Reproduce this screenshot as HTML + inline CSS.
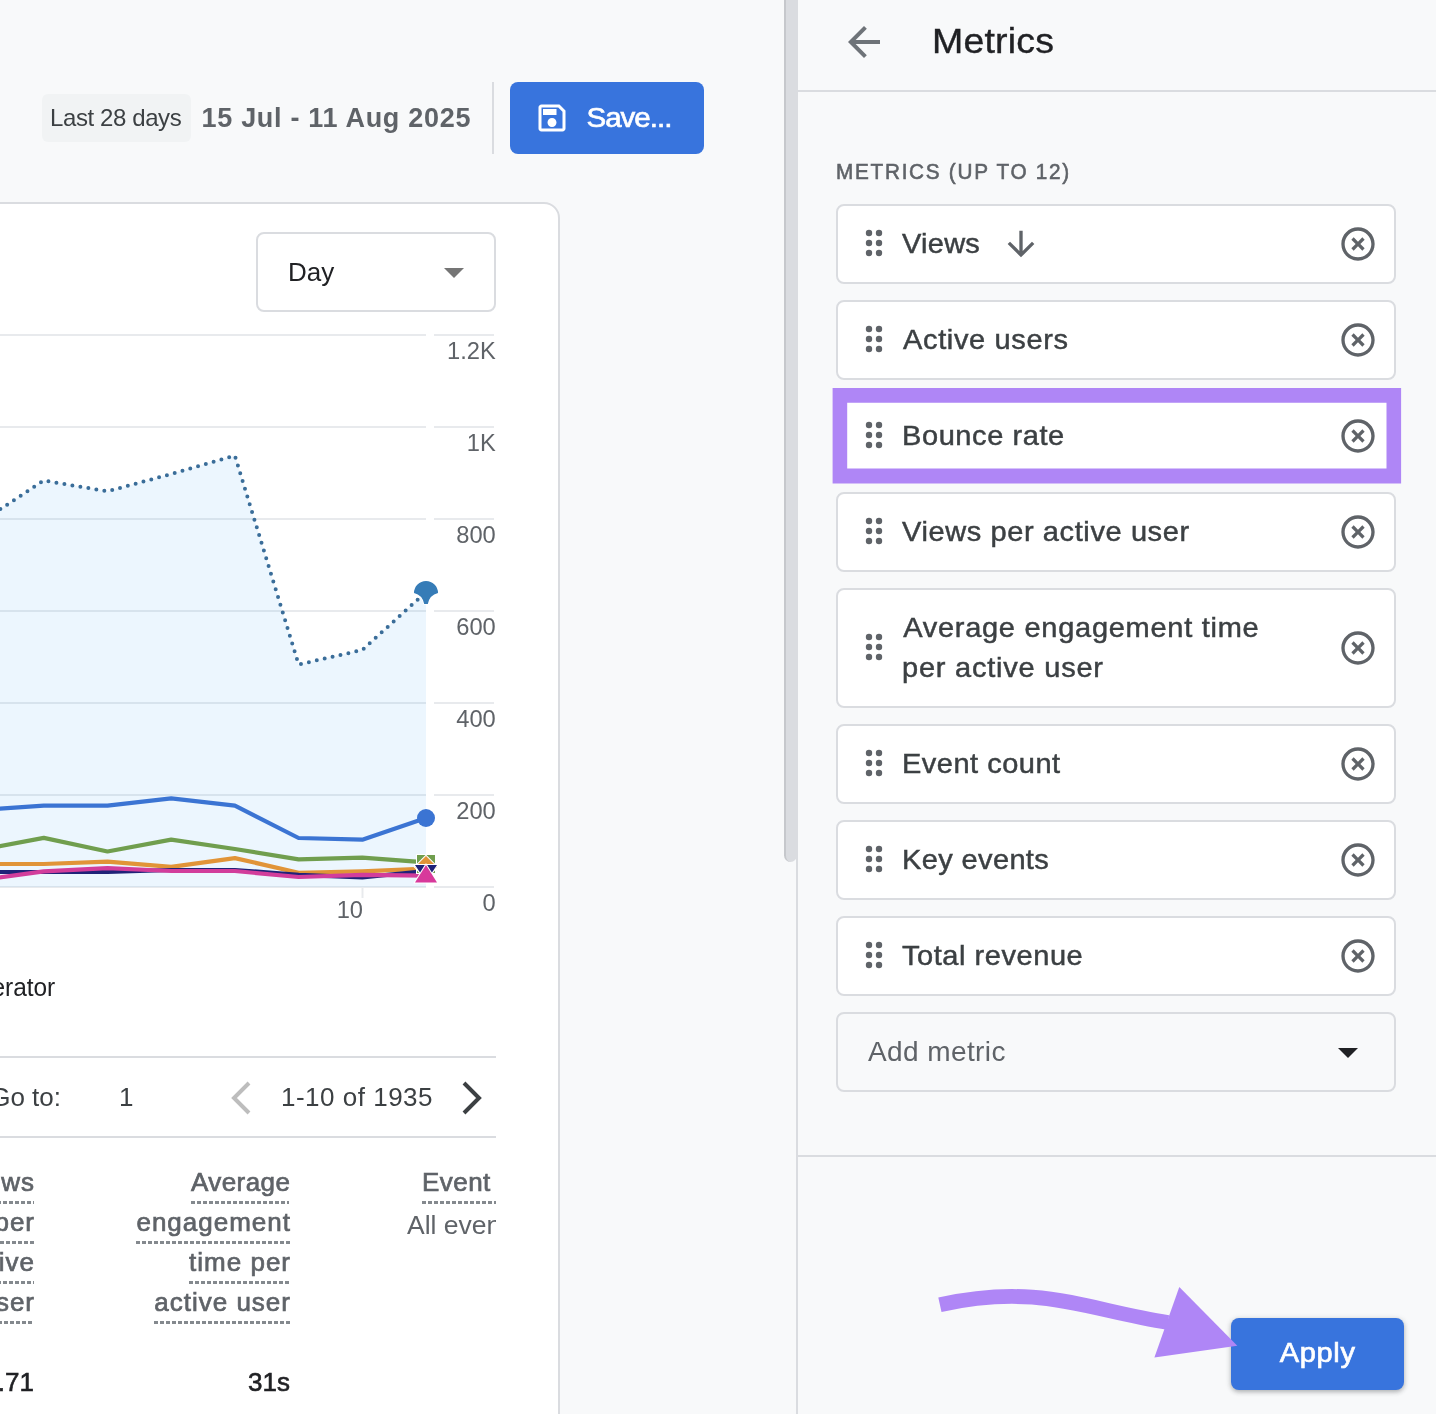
<!DOCTYPE html>
<html>
<head>
<meta charset="utf-8">
<title>Metrics</title>
<style>
*{box-sizing:border-box;margin:0;padding:0}
html,body{width:1436px;height:1414px;overflow:hidden;background:#f8f9fa;font-family:"Liberation Sans",sans-serif;}
body{position:relative;will-change:transform}
.abs{position:absolute}
.t{position:absolute;white-space:nowrap;line-height:1}
/* left side */
#leftcard{position:absolute;left:-20px;top:202px;width:580px;height:1260px;background:#fff;border:2px solid #dadce0;border-radius:16px}
#chip{position:absolute;left:42px;top:94px;width:149px;height:48px;background:#f1f3f4;border-radius:6px}
#savebtn{position:absolute;left:510px;top:82px;width:194px;height:72px;background:#3874dd;border-radius:8px}
#daybox{position:absolute;left:256px;top:232px;width:240px;height:80px;border:2px solid #dadce0;border-radius:8px;background:#fff}
.hline{position:absolute;height:2px;background:#dadce0}
/* right panel */
#scroll{position:absolute;left:784px;top:-10px;width:13px;height:872px;background:#dadce0;border-radius:7px;border-left:2px solid #c6c8cc}
#panelborder{position:absolute;left:796px;top:0;width:2px;height:1414px;background:#dadce0}
.card{position:absolute;left:836px;width:560px;height:80px;background:#fff;border:2px solid #dadce0;border-radius:8px}
.card .lbl{position:absolute;left:64px;top:23.3px;font-size:29px;line-height:32px;color:#3c4043;white-space:nowrap;letter-spacing:0.3px;-webkit-text-stroke:0.5px #3c4043;transform-origin:0 0;transform:scaleY(0.93)}
.card svg.drag{position:absolute;left:16px;top:17px}
.card svg.rm{position:absolute;left:500px;top:18px}
#applybtn{position:absolute;left:1231px;top:1318px;width:173px;height:72px;background:#3874dd;border-radius:8px;box-shadow:0 2px 4px rgba(60,64,67,.3),0 1px 6px rgba(60,64,67,.15)}
</style>
</head>
<body>

<!-- ============ LEFT SIDE ============ -->
<div id="chip"></div>
<div class="t" id="chiptxt" style="left:50px;top:105.5px;font-size:24px;color:#3c4043;letter-spacing:-0.4px">Last 28 days</div>
<div class="t" id="datetxt" style="left:201.5px;top:104.9px;font-size:27px;font-weight:bold;color:#5f6368;letter-spacing:0.7px">15 Jul - 11 Aug 2025</div>
<div class="abs" style="left:492px;top:82px;width:2px;height:72px;background:#dadce0"></div>
<div id="savebtn">
  <svg class="abs" style="left:24px;top:18px" width="36" height="36" viewBox="0 0 24 24"><path fill="#fff" d="M17 3H5c-1.11 0-2 .9-2 2v14c0 1.1.89 2 2 2h14c1.1 0 2-.9 2-2V7l-4-4zm2 16H5V5h11.17L19 7.830V19zm-7-7c-1.660 0-3 1.340-3 3s1.340 3 3 3 3-1.340 3-3-1.340-3-3-3zM6 6h9v4H6z"/></svg>
  <div class="t" id="savetxt" style="left:76.5px;top:21.9px;font-size:29.5px;color:#fff;letter-spacing:-1px;-webkit-text-stroke:0.7px #fff;transform-origin:0 0;transform:scaleY(0.93)">Save...</div>
</div>

<div id="leftcard"></div>
<div id="daybox"></div>
<div class="t" id="daytxt" style="left:288px;top:259px;font-size:26px;color:#202124">Day</div>
<svg class="abs" style="left:444px;top:268px" width="20" height="10" viewBox="0 0 20 10"><path d="M0 0h20L10 10z" fill="#757575"/></svg>

<!-- CHART -->
<svg id="chart" class="abs" style="left:0;top:320px;font-family:'Liberation Sans',sans-serif" width="560" height="620" viewBox="0 320 560 620">
  <path d="M0 335H426M434 335H494" stroke="#e8eaed" stroke-width="2"/>
  <path d="M0 427H426M434 427H494" stroke="#e8eaed" stroke-width="2"/>
  <path d="M0 519H426M434 519H494" stroke="#e8eaed" stroke-width="2"/>
  <path d="M0 611H426M434 611H494" stroke="#e8eaed" stroke-width="2"/>
  <path d="M0 703H426M434 703H494" stroke="#e8eaed" stroke-width="2"/>
  <path d="M0 795H426M434 795H494" stroke="#e8eaed" stroke-width="2"/>
  <path d="M0 887H426M434 887H494" stroke="#e8eaed" stroke-width="2"/>
  <path d="M362.500 887v11" stroke="#e8eaed" stroke-width="2"/>
  <polygon points="-19.9,522.5 43.8,480.5 107.5,491.4 171.2,474.0 234.9,455.6 298.6,664.5 362.3,650.0 426.0,592.0 426,887 -19.9,887" fill="rgba(66,165,245,0.1)"/>
  <polyline points="-19.9,522.5 43.8,480.5 107.5,491.4 171.2,474.0 234.9,455.6 298.6,664.5 362.3,650.0 426.0,592.0" fill="none" stroke="#3a6d99" stroke-width="4" stroke-linecap="round" stroke-linejoin="round" stroke-dasharray="0 8.100"/>
  <polyline points="-19.9,810.0 43.8,805.7 107.5,805.7 171.2,798.3 234.9,805.7 298.6,838.0 362.3,839.7 426.0,817.9" fill="none" stroke="#3b74d3" stroke-width="4.200" stroke-linejoin="round"/>
  <polyline points="-19.9,850.0 43.8,837.9 107.5,851.5 171.2,839.6 234.9,849.0 298.6,859.4 362.3,857.7 426.0,862.4" fill="none" stroke="#709e4e" stroke-width="4.200" stroke-linejoin="round"/>
  <polyline points="-19.9,864.0 43.8,864.0 107.5,861.6 171.2,866.9 234.9,858.1 298.6,872.8 362.3,871.4 426.0,868.6" fill="none" stroke="#e19438" stroke-width="4.200" stroke-linejoin="round"/>
  <polyline points="-19.9,872.0 43.8,872.0 107.5,871.8 171.2,870.0 234.9,870.0 298.6,874.8 362.3,877.4 426.0,871.0" fill="none" stroke="#1f2278" stroke-width="4.200" stroke-linejoin="round"/>
  <polyline points="-19.9,880.0 43.8,871.4 107.5,868.1 171.2,871.0 234.9,871.0 298.6,877.0 362.3,874.8 426.0,875.6" fill="none" stroke="#d23d9b" stroke-width="4.200" stroke-linejoin="round"/>
  <path d="M414 593A12 12 0 0 1 438 593Q429.500 595 427.800 604H424.200Q422.500 595 414 593z" fill="#367cb7" stroke="#fff" stroke-width="1.500" paint-order="stroke"/>
  <circle cx="426" cy="818" r="9" fill="#3b74d3"/>
  <rect x="417" y="855" width="18" height="18" fill="#709e4e" stroke="#fff" stroke-width="2" paint-order="stroke"/>
  <path d="M426 856L437 867L426 878L415 867z" fill="#e19438" stroke="#fff" stroke-width="2" paint-order="stroke"/>
  <path d="M415 865H437L426 881.500z" fill="#1f2278" stroke="#fff" stroke-width="2" paint-order="stroke"/>
  <path d="M426 865L437 882.600H415z" fill="#d8399b" stroke="#fff" stroke-width="2" paint-order="stroke"/>
  <text x="495.800" y="359" text-anchor="end" font-size="23.700" fill="#5f6368">1.2K</text>
  <text x="495.800" y="451" text-anchor="end" font-size="23.700" fill="#5f6368">1K</text>
  <text x="495.800" y="543" text-anchor="end" font-size="23.700" fill="#5f6368">800</text>
  <text x="495.800" y="635" text-anchor="end" font-size="23.700" fill="#5f6368">600</text>
  <text x="495.800" y="727" text-anchor="end" font-size="23.700" fill="#5f6368">400</text>
  <text x="495.800" y="819" text-anchor="end" font-size="23.700" fill="#5f6368">200</text>
  <text x="495.800" y="911" text-anchor="end" font-size="23.700" fill="#5f6368">0</text>
  <text x="363" y="918" text-anchor="end" font-size="23.700" fill="#5f6368">10</text>
</svg>

<!-- legend fragment -->
<div class="t" id="legtxt" style="right:1380.5px;top:974px;font-size:26px;color:#202124;transform-origin:100% 0;transform:scaleX(0.94)">Plagiarism Checker &amp; Generator</div>

<!-- pagination -->
<div class="hline" style="left:0;top:1056px;width:496px"></div>
<div class="hline" style="left:0;top:1136px;width:496px"></div>
<div class="t" id="goto" style="right:1375px;top:1084px;font-size:26px;color:#3c4043">Go to:</div>
<div class="t" id="pg1" style="left:119px;top:1084px;font-size:26px;color:#3c4043">1</div>
<svg class="abs" style="left:225.5px;top:1078px" width="32" height="40" viewBox="0 0 32 40"><path d="M23 5L8 20l15 15" fill="none" stroke="#bdbdbd" stroke-width="4"/></svg>
<div class="t" id="range" style="left:281px;top:1084px;font-size:26px;color:#3c4043;letter-spacing:0.5px">1-10 of 1935</div>
<svg class="abs" style="left:455.3px;top:1078px" width="32" height="40" viewBox="0 0 32 40"><path d="M9 5l15 15L9 35" fill="none" stroke="#3c4043" stroke-width="4"/></svg>

<!-- table header -->
<style>
.th{position:absolute;text-align:right;font-size:26px;line-height:40px;color:#5f6368;white-space:nowrap;-webkit-text-stroke:0.7px #5f6368}
.th div{height:40px}
.th span{display:inline-block;position:relative;height:40px;letter-spacing:1px;margin-right:-1px}
.th span::after{content:"";position:absolute;left:0;right:1px;top:39px;height:3px;background:repeating-linear-gradient(90deg,#84898e 0,#84898e 4.4px,transparent 4.4px,transparent 6px)}
.tv{position:absolute;font-size:26px;line-height:1;color:#202124;white-space:nowrap;-webkit-text-stroke:0.6px #202124;letter-spacing:0}
</style>
<div class="th" id="th1" style="right:1402px;top:1162px"><div><span>Views</span></div><div><span>per</span></div><div><span>active</span></div><div><span>user</span></div></div>
<div class="th" id="th2" style="right:1146px;top:1162px"><div><span id="l1" style="letter-spacing:0.45px;margin-right:-0.45px">Average</span></div><div><span id="l2">engagement</span></div><div><span id="l3">time per</span></div><div><span id="l4">active user</span></div></div>
<div class="abs" style="left:400px;top:1150px;width:96px;height:120px;overflow:hidden">
  <div class="th" id="th3" style="left:22px;top:12px;text-align:left"><div><span style="letter-spacing:0.45px">Event count</span></div></div>
  <div class="t" id="allev" style="left:7px;top:62px;font-size:26.5px;color:#5f6368">All events</div>
</div>
<div class="tv" id="tv1" style="right:1402px;top:1369px">1.71</div>
<div class="tv" id="tv2" style="right:1146px;top:1369px">31s</div>

<!-- ============ RIGHT PANEL ============ -->
<div id="panelborder"></div>
<div id="scroll"></div>
<svg class="abs" style="left:840px;top:18px" width="48" height="48" viewBox="0 0 24 24"><path fill="#6e7378" d="M20 11H7.830l5.590-5.590L12 4l-8 8 8 8 1.410-1.410L7.830 13H20v-2z"/></svg>
<div class="t" id="title" style="left:932px;top:24.1px;font-size:37.5px;color:#202124;letter-spacing:0.2px;-webkit-text-stroke:0.4px #202124;transform-origin:0 0;transform:scaleY(0.935)">Metrics</div>
<div class="hline" style="left:798px;top:90px;width:638px"></div>
<div class="t" id="sect" style="left:836px;top:160.8px;font-size:22.3px;color:#5f6368;letter-spacing:1.85px;-webkit-text-stroke:0.6px #5f6368;transform-origin:0 0;transform:scaleX(0.93)">METRICS (UP TO 12)</div>

<svg width="0" height="0" style="position:absolute">
  <defs>
    <symbol id="drag" viewBox="0 0 24 24"><g fill="#5f6368"><circle cx="9" cy="6" r="1.920"/><circle cx="15" cy="6" r="1.920"/><circle cx="9" cy="12" r="1.920"/><circle cx="15" cy="12" r="1.920"/><circle cx="9" cy="18" r="1.920"/><circle cx="15" cy="18" r="1.920"/></g></symbol>
    <symbol id="rm" viewBox="0 0 24 24"><path fill="#5f6368" d="M14.590 8L12 10.590 9.410 8 8 9.410 10.590 12 8 14.590 9.410 16 12 13.410 14.590 16 16 14.590 13.410 12 16 9.410 14.590 8zM12 2C6.470 2 2 6.470 2 12s4.470 10 10 10 10-4.470 10-10S17.530 2 12 2zm0 18c-4.410 0-8-3.590-8-8s3.590-8 8-8 8 3.590 8 8-3.590 8-8 8z"/></symbol>
  </defs>
</svg>

<div class="card" style="top:204px"><svg class="drag" width="40" height="40"><use href="#drag"/></svg><div class="lbl" id="lb0" style="letter-spacing:0.25px">Views</div>
  <svg class="abs" style="left:163px;top:18px" width="40" height="40" viewBox="0 0 24 24"><path fill="#5f6368" d="M20 12l-1.410-1.410L13 16.170V4h-2v12.170l-5.580-5.590L4 12l8 8 8-8z"/></svg>
  <svg class="rm" width="40" height="40"><use href="#rm"/></svg></div>
<div class="card" style="top:300px"><svg class="drag" width="40" height="40"><use href="#drag"/></svg><div class="lbl" id="lb1" style="margin-left:1px;letter-spacing:0.65px">Active users</div><svg class="rm" width="40" height="40"><use href="#rm"/></svg></div>
<div class="card" style="top:396px"><svg class="drag" width="40" height="40"><use href="#drag"/></svg><div class="lbl" id="lb2" style="letter-spacing:0.58px">Bounce rate</div><svg class="rm" width="40" height="40"><use href="#rm"/></svg></div>
<div class="card" style="top:492px"><svg class="drag" width="40" height="40"><use href="#drag"/></svg><div class="lbl" id="lb3" style="letter-spacing:0.6px">Views per active user</div><svg class="rm" width="40" height="40"><use href="#rm"/></svg></div>
<div class="card" style="top:588px;height:120px"><svg class="drag" style="top:37px" width="40" height="40"><use href="#drag"/></svg><div class="lbl" id="lb7" style="top:17.8px;line-height:43px"><span id="lb7a" style="margin-left:1.2px;letter-spacing:0.72px">Average engagement time</span><br><span id="lb7b" style="letter-spacing:0.77px">per active user</span></div><svg class="rm" style="top:38px" width="40" height="40"><use href="#rm"/></svg></div>
<div class="card" style="top:724px"><svg class="drag" width="40" height="40"><use href="#drag"/></svg><div class="lbl" id="lb4" style="letter-spacing:0.5px">Event count</div><svg class="rm" width="40" height="40"><use href="#rm"/></svg></div>
<div class="card" style="top:820px"><svg class="drag" width="40" height="40"><use href="#drag"/></svg><div class="lbl" id="lb5" style="letter-spacing:0.37px">Key events</div><svg class="rm" width="40" height="40"><use href="#rm"/></svg></div>
<div class="card" style="top:916px"><svg class="drag" width="40" height="40"><use href="#drag"/></svg><div class="lbl" id="lb6" style="letter-spacing:0.55px">Total revenue</div><svg class="rm" width="40" height="40"><use href="#rm"/></svg></div>
<div class="card" style="top:1012px;background:transparent"><div class="t" id="addm" style="left:30px;top:24px;font-size:28px;color:#5f6368;letter-spacing:0.4px">Add metric</div>
  <svg class="abs" style="left:500px;top:34px" width="20" height="10" viewBox="0 0 20 10"><path d="M0 0h20L10 10z" fill="#202124"/></svg></div>

<!-- purple highlight -->
<svg class="abs" style="left:820px;top:380px" width="600" height="112" viewBox="820 380 600 112"><path fill-rule="evenodd" fill="#af86f6" d="M832.600 387.900H1401.100V483.400H832.600zM847.200 402.700V468.500H1386.500V402.700z"/></svg>


<div class="hline" style="left:798px;top:1155px;width:638px"></div>
<div id="applybtn"><div class="t" id="applytxt" style="left:48.8px;top:21.9px;font-size:29px;color:#fff;letter-spacing:0.65px;-webkit-text-stroke:0.7px #fff;transform-origin:0 0;transform:scaleY(0.93)">Apply</div></div>

<!-- purple arrow -->
<svg class="abs" style="left:920px;top:1270px" width="340" height="110" viewBox="920 1270 340 110">
  <path d="M939.900 1304.800C1040 1282.600 1087 1310.200 1168 1322.500" fill="none" stroke="#af86f6" stroke-width="14.800"/>
  <path d="M1179.300 1287L1237.300 1345.800L1154.400 1357.600z" fill="#af86f6"/>
</svg>
</body>
</html>
